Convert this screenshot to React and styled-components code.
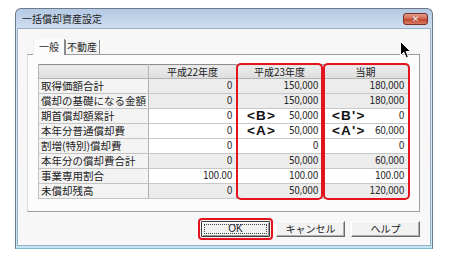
import React from 'react';
import styled, { createGlobalStyle } from 'styled-components';

const Global = createGlobalStyle`
  html, body { margin: 0; padding: 0; background: #fff; }
  body {
    width: 449px; height: 253px; overflow: hidden;
    font-family: "Noto Sans CJK JP", "Noto Sans", sans-serif;
    color: #1e1e1e;
  }
`;

const Page = styled.div`
  position: relative;
  width: 449px;
  height: 253px;
  box-sizing: border-box;
  padding: 8px 0 0 15px;
`;

const Window = styled.div`
  width: 418px;
  height: 241px;
  box-sizing: border-box;
  border: 1px solid #6c7a8a;
  border-bottom-color: #7fb6d0;
  border-radius: 6px 6px 0 0;
  background: linear-gradient(180deg, #b4c9e4 0px, #cfdef0 19px, #d9e7f3 60%, #c0e6f5 100%);
  display: flex;
  flex-direction: column;
  padding: 0 1px 2px 1px;
`;

const TitleBar = styled.div`
  height: 19px;
  display: flex;
  align-items: center;
  padding: 0 3px 0 5px;
`;

const Title = styled.span`
  font-size: 10px;
  line-height: 12px;
  color: #1b1b1b;
  flex: 1;
`;

const CloseButton = styled.div`
  width: 25px;
  height: 12px;
  margin-top: 1px;
  box-sizing: border-box;
  border: 1px solid #7a2f26;
  border-radius: 3px;
  background: linear-gradient(180deg, #e49c8c 0%, #d36a55 45%, #c24a33 55%, #d77a62 100%);
  display: flex;
  align-items: center;
  justify-content: center;
  color: #fff;
  font-family: "DejaVu Sans", sans-serif;
  font-weight: bold;
  font-size: 9px;
  line-height: 9px;
  text-shadow: 0 0 1px #6a1d12;
`;

const Body = styled.div`
  flex: 1;
  background: #f7f7f7;
  border: 1px solid #9aaec4;
  display: flex;
  flex-direction: column;
  padding: 9px 10px 0 9px;
`;

const TabRow = styled.div`
  display: flex;
  align-items: flex-end;
  height: 16px;
  padding-left: 6px;
`;

const Tab = styled.div`
  font-size: 10px;
  line-height: 12px;
  height: ${p => (p.$active ? '16px' : '14px')};
  box-sizing: border-box;
  padding: ${p => (p.$active ? '2px 5px 0 5px' : '1px 2px 0 1px')};
  background: ${p => (p.$active ? '#fcfcfc' : '#f4f4f4')};
  border-left: 1px solid ${p => (p.$active ? '#ececec' : '#8a8a8a')};
  border-right: 1px solid #8a8a8a;
  margin-bottom: ${p => (p.$active ? '-1px' : '0')};
  position: relative;
  z-index: ${p => (p.$active ? 1 : 0)};
`;

const Panel = styled.div`
  height: 158px;
  box-sizing: border-box;
  border: 1px solid #9c9c9c;
  border-left-color: #dcdcdc;
  background: #fcfcfc;
  padding: 9px 0 0 10px;
`;

const TableWrap = styled.div`
  position: relative;
  width: 370px;
`;

const Table = styled.table`
  border-collapse: collapse;
  table-layout: fixed;
  width: 370px;
  border: 1px solid #8d8d8d;
  border-right-color: #c2c2c2;
  border-bottom-color: #b8b8b8;
`;

const Col = styled.col`
  width: ${p => p.$w}px;
`;

const HeadCell = styled.th`
  height: 13px;
  padding: 0;
  font-weight: normal;
  font-size: 10px;
  line-height: 13px;
  text-align: center;
  background: linear-gradient(180deg, #ececec, #dedede);
  border: 1px solid #b4b4b4;
  border-top: none;
  color: #222;
`;

const LabelCell = styled.td`
  height: 14px;
  padding: 0 0 0 2px;
  font-size: 10.5px;
  line-height: 14px;
  white-space: nowrap;
  overflow: hidden;
  background: #f3f3f3;
  border: 1px solid #c4c4c4;
  border-right-color: #b0b0b0;
  color: #222;
`;

const ValueCell = styled.td`
  height: 14px;
  padding: 0 4px 0 0;
  background: ${p => (p.$input ? '#ffffff' : '#ececec')};
  border: 1px solid #c8c8c8;
  border-right-color: #b0b0b0;
`;

const CellInner = styled.div`
  display: flex;
  align-items: center;
  justify-content: flex-end;
  height: 14px;
  position: relative;
`;

const Num = styled.span`
  font-family: "Liberation Sans Narrow", "DejaVu Sans Condensed", "Liberation Sans", sans-serif;
  font-size: 10px;
  line-height: 14px;
  letter-spacing: -0.4px;
  color: #2a2a2a;
`;

const Mark = styled.span`
  position: absolute;
  left: ${p => p.$left}px;
  top: -1px;
  font-family: "Liberation Sans", "DejaVu Sans", sans-serif;
  font-weight: bold;
  font-size: 13.5px;
  line-height: 15px;
  letter-spacing: 1.2px;
  color: #111;
`;

const Highlight = styled.div`
  position: absolute;
  top: -1px;
  left: ${p => p.$left}px;
  width: ${p => p.$w}px;
  height: 137px;
  box-sizing: border-box;
  border: 2px solid #e3141d;
  border-radius: 5px;
  pointer-events: none;
`;

const ButtonRow = styled.div`
  display: flex;
  justify-content: flex-end;
  gap: 6px;
  margin-top: 9px;
`;

const Button = styled.div`
  width: 69px;
  height: 16px;
  box-sizing: border-box;
  font-size: 10px;
  line-height: 14px;
  text-align: center;
  background: #f2f2f2;
  border: 1px solid;
  border-color: #ffffff #6a6a6a #6a6a6a #ffffff;
  box-shadow: inset -1px -1px 0 #b0b0b0;
  color: #222;
  position: relative;
  ${p =>
    p.$default &&
    `
    border-color: #3a3a3a;
    box-shadow: inset 1px 1px 0 #fff, inset -1px -1px 0 #9a9a9a;
    outline: 2px solid #e3141d;
    outline-offset: 1px;
    border-radius: 1px;
    font-family: "Liberation Sans", sans-serif;
    &::after {
      content: '';
      position: absolute;
      inset: 2px;
      border: 1px dotted #444;
    }
  `}
`;

const Cursor = styled.svg`
  position: absolute;
  left: 400px;
  top: 41px;
`;

const rows = [
  { label: '取得価額合計', v: ['0', '150,000', '180,000'], input: false },
  { label: '償却の基礎になる金額', v: ['0', '150,000', '180,000'], input: false },
  { label: '期首償却額累計', v: ['0', '50,000', '0'], input: true, marks: [null, '<B>', "<B'>"] },
  { label: '本年分普通償却費', v: ['0', '50,000', '60,000'], input: true, marks: [null, '<A>', "<A'>"] },
  { label: '割増(特別)償却費', v: ['0', '0', '0'], input: true },
  { label: '本年分の償却費合計', v: ['0', '50,000', '60,000'], input: false },
  { label: '事業専用割合', v: ['100.00', '100.00', '100.00'], input: true },
  { label: '未償却残高', v: ['0', '50,000', '120,000'], input: false },
];

export default function App() {
  return (
    <Page>
      <Global />
      <Window>
        <TitleBar>
          <Title>一括償却資産設定</Title>
          <CloseButton>✕</CloseButton>
        </TitleBar>
        <Body>
          <TabRow>
            <Tab $active>一般</Tab>
            <Tab>不動産</Tab>
          </TabRow>
          <Panel>
            <TableWrap>
              <Table>
                <colgroup>
                  <Col $w={110} />
                  <Col $w={88} />
                  <Col $w={86} />
                  <Col $w={86} />
                </colgroup>
                <thead>
                  <tr>
                    <HeadCell />
                    <HeadCell>平成22年度</HeadCell>
                    <HeadCell>平成23年度</HeadCell>
                    <HeadCell>当期</HeadCell>
                  </tr>
                </thead>
                <tbody>
                  {rows.map(r => (
                    <tr key={r.label}>
                      <LabelCell>{r.label}</LabelCell>
                      {r.v.map((val, i) => (
                        <ValueCell key={i} $input={r.input}>
                          <CellInner>
                            {r.marks && r.marks[i] && <Mark $left={i === 2 ? 9 : 10}>{r.marks[i]}</Mark>}
                            <Num>{val}</Num>
                          </CellInner>
                        </ValueCell>
                      ))}
                    </tr>
                  ))}
                </tbody>
              </Table>
              <Highlight $left={198} $w={87} />
              <Highlight $left={285} $w={87} />
            </TableWrap>
          </Panel>
          <ButtonRow>
            <Button $default>OK</Button>
            <Button>キャンセル</Button>
            <Button>ヘルプ</Button>
          </ButtonRow>
        </Body>
      </Window>
      <Cursor width="12" height="18" viewBox="0 0 12 18">
        <path d="M0.5 0.5 L0.5 14.5 L3.8 11.3 L6.2 16.8 L8.4 15.8 L6.1 10.5 L10.6 10.5 Z" fill="#000" stroke="#fff" strokeWidth="1" strokeLinejoin="round" />
      </Cursor>
    </Page>
  );
}
